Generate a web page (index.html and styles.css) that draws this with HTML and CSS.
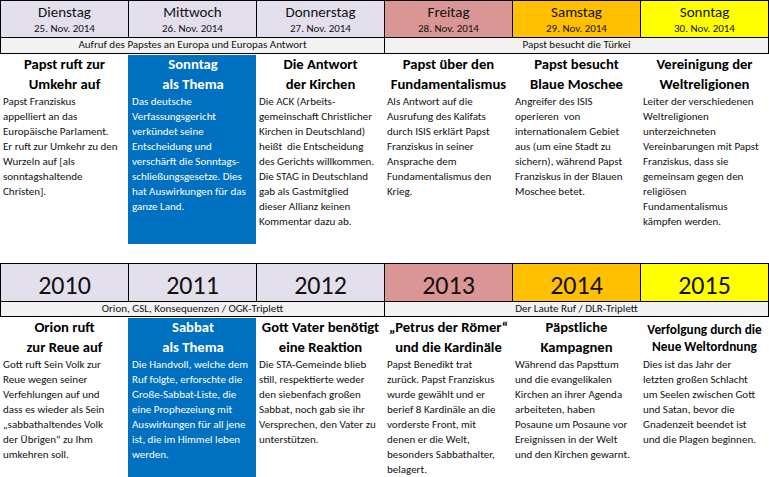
FILE: index.html
```html
<!DOCTYPE html>
<html lang="de">
<head>
<meta charset="utf-8">
<title>Wochenübersicht</title>
<link rel="stylesheet" href="styles.css">
</head>
<body>
<main class="page">
  <section class="block">
    <div class="head-grid head-days">
      <div class="cell lav"><div class="day-name">Dienstag</div><div class="day-date">25. Nov. 2014</div></div>
      <div class="cell lav"><div class="day-name">Mittwoch</div><div class="day-date">26. Nov. 2014</div></div>
      <div class="cell lav"><div class="day-name">Donnerstag</div><div class="day-date">27. Nov. 2014</div></div>
      <div class="cell pink"><div class="day-name">Freitag</div><div class="day-date">28. Nov. 2014</div></div>
      <div class="cell orange"><div class="day-name">Samstag</div><div class="day-date">29. Nov. 2014</div></div>
      <div class="cell yellow"><div class="day-name">Sonntag</div><div class="day-date">30. Nov. 2014</div></div>
      <div class="theme">Aufruf des Papstes an Europa und Europas Antwort</div>
      <div class="theme">Papst besucht die Türkei</div>
    </div>
    <div class="cols cols-top">
      <article class="col">
        <h2 class="title">Papst ruft zur<br>Umkehr auf</h2>
        <p class="text">Papst Franziskus<br>appelliert an das<br>Europäische Parlament.<br>Er ruft zur Umkehr zu den<br>Wurzeln auf [als<br>sonntagshaltende<br>Christen].</p>
      </article>
      <article class="col blue">
        <h2 class="title">Sonntag<br>als Thema</h2>
        <p class="text">Das deutsche<br>Verfassungsgericht<br>verkündet seine<br>Entscheidung und<br>verschärft die Sonntags-<br>schließungsgesetze. Dies<br>hat Auswirkungen für das<br>ganze Land.</p>
      </article>
      <article class="col">
        <h2 class="title">Die Antwort<br>der Kirchen</h2>
        <p class="text">Die ACK (Arbeits-<br>gemeinschaft Christlicher<br>Kirchen in Deutschland)<br>heißt&nbsp; die Entscheidung<br>des Gerichts willkommen.<br>Die STAG in Deutschland<br>gab als Gastmitglied<br>dieser Allianz keinen<br>Kommentar dazu ab.</p>
      </article>
      <article class="col">
        <h2 class="title">Papst über den<br>Fundamentalismus</h2>
        <p class="text">Als Antwort auf die<br>Ausrufung des Kalifats<br>durch ISIS erklärt Papst<br>Franziskus in seiner<br>Ansprache dem<br>Fundamentalismus den<br>Krieg.</p>
      </article>
      <article class="col">
        <h2 class="title">Papst besucht<br>Blaue Moschee</h2>
        <p class="text">Angreifer des ISIS<br>operieren&nbsp; von<br>internationalem Gebiet<br>aus (um eine Stadt zu<br>sichern), während Papst<br>Franziskus in der Blauen<br>Moschee betet.</p>
      </article>
      <article class="col">
        <h2 class="title">Vereinigung der<br>Weltreligionen</h2>
        <p class="text">Leiter der verschiedenen<br>Weltreligionen<br>unterzeichneten<br>Vereinbarungen mit Papst<br>Franziskus, dass sie<br>gemeinsam gegen den<br>religiösen<br>Fundamentalismus<br>kämpfen werden.</p>
      </article>
    </div>
  </section>

  <section class="block block-years">
    <div class="head-grid head-years">
      <div class="cell lav"><div class="year">2010</div></div>
      <div class="cell lav"><div class="year">2011</div></div>
      <div class="cell lav"><div class="year">2012</div></div>
      <div class="cell pink"><div class="year">2013</div></div>
      <div class="cell orange"><div class="year">2014</div></div>
      <div class="cell yellow"><div class="year">2015</div></div>
      <div class="theme">Orion, GSL, Konsequenzen / OGK-Triplett</div>
      <div class="theme">Der Laute Ruf / DLR-Triplett</div>
    </div>
    <div class="cols cols-bottom">
      <article class="col">
        <h2 class="title">Orion ruft<br>zur Reue auf</h2>
        <p class="text">Gott ruft Sein Volk zur<br>Reue wegen seiner<br>Verfehlungen auf und<br>dass es wieder als Sein<br>„sabbathaltendes Volk<br>der Übrigen“ zu Ihm<br>umkehren soll.</p>
      </article>
      <article class="col blue">
        <h2 class="title">Sabbat<br>als Thema</h2>
        <p class="text">Die Handvoll, welche dem<br>Ruf folgte, erforschte die<br>Große-Sabbat-Liste, die<br>eine Prophezeiung mit<br>Auswirkungen für all jene<br>ist, die im Himmel leben<br>werden.</p>
      </article>
      <article class="col">
        <h2 class="title">Gott Vater benötigt<br>eine Reaktion</h2>
        <p class="text">Die STA-Gemeinde blieb<br>still, respektierte weder<br>den siebenfach großen<br>Sabbat, noch gab sie ihr<br>Versprechen, den Vater zu<br>unterstützen.</p>
      </article>
      <article class="col">
        <h2 class="title">„Petrus der Römer“<br>und die Kardinäle</h2>
        <p class="text">Papst Benedikt trat<br>zurück. Papst Franziskus<br>wurde gewählt und er<br>berief 8 Kardinäle an die<br>vorderste Front, mit<br>denen er die Welt,<br>besonders Sabbathalter,<br>belagert.</p>
      </article>
      <article class="col">
        <h2 class="title">Päpstliche<br>Kampagnen</h2>
        <p class="text">Während das Papsttum<br>und die evangelikalen<br>Kirchen an ihrer Agenda<br>arbeiteten, haben<br>Posaune um Posaune vor<br>Ereignissen in der Welt<br>und den Kirchen gewarnt.</p>
      </article>
      <article class="col">
        <h2 class="title title-small">Verfolgung durch die<br>Neue Weltordnung</h2>
        <p class="text">Dies ist das Jahr der<br>letzten großen Schlacht<br>um Seelen zwischen Gott<br>und Satan, bevor die<br>Gnadenzeit beendet ist<br>und die Plagen beginnen.</p>
      </article>
    </div>
  </section>
</main>
</body>
</html>
```

FILE: styles.css
```css
* { box-sizing: border-box; }

html, body {
  margin: 0;
  padding: 0;
  background: #ffffff;
}

body {
  font-family: Carlito, Calibri, Lato, "Liberation Sans", sans-serif;
  color: #111111;
  width: 769px;
  height: 477px;
  overflow: hidden;
}

.page {
  display: flex;
  flex-direction: column;
}

.block-years {
  margin-top: 19px;
}

.head-grid {
  display: grid;
  grid-template-columns: repeat(6, 127px);
  gap: 1px;
  padding: 1px;
  background: #000000;
  width: 769px;
}

.head-days {
  grid-template-rows: 36px 15px;
}

.head-years {
  grid-template-rows: 37px 14px;
}

.cell {
  display: flex;
  flex-direction: column;
  align-items: center;
  justify-content: center;
}

.lav { background: #e4dfec; }
.pink { background: #da9694; }
.orange { background: #ffc000; }
.yellow { background: #ffff00; }

.day-name {
  font-size: 15px;
  line-height: 18px;
  margin-top: 1px;
}

.day-date {
  font-size: 11px;
  line-height: 14px;
  margin-top: 1px;
}

.year {
  font-size: 26px;
  line-height: 30px;
  margin-top: 4px;
}

.theme {
  grid-column: span 3;
  background: #f2f2f2;
  font-size: 11px;
  line-height: 14px;
  text-align: center;
}

.cols {
  display: grid;
  grid-template-columns: repeat(6, 128px);
  margin-top: 1px;
}

.cols-top {
  height: 189px;
}

.cols-bottom {
  margin-top: 1px;
  height: 160px;
}

.col {
  padding: 0 2px 0 3px;
  min-width: 0;
}

.col.blue {
  background: #0070c0;
  color: #ffffff;
  padding-left: 4px;
}

.title {
  margin: 0;
  font-size: 14.67px;
  font-weight: 700;
  line-height: 19.5px;
  text-align: center;
  white-space: nowrap;
  color: #000000;
}

.col.blue .title {
  color: #ffffff;
}

.title-small {
  font-size: 13.3px;
  line-height: 17px;
  padding-top: 3px;
  padding-bottom: 2px;
}

.text {
  margin: 0;
  font-size: 11px;
  line-height: 15px;
  white-space: nowrap;
}
```
